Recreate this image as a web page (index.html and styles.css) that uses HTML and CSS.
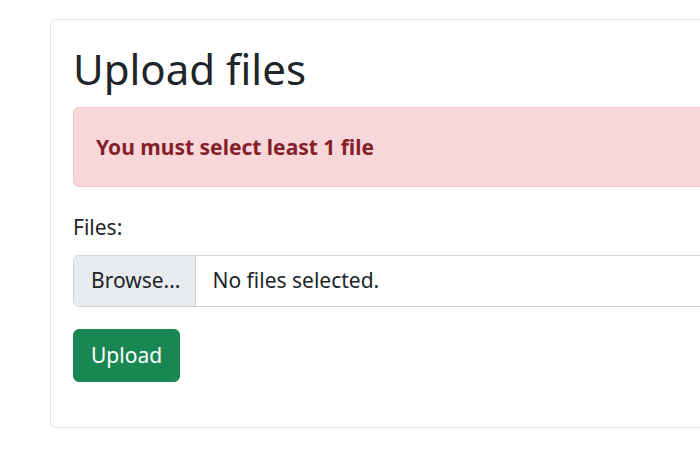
FILE: index.html
```html
<!DOCTYPE html>
<html lang="en">
<head>
<meta charset="utf-8">
<title>Upload files</title>
<link rel="stylesheet" href="styles.css">
</head>
<body>
<div class="page">
  <div class="card">
    <h1 class="title">Upload files</h1>
    <div class="alert"><strong>You must select least 1 file</strong></div>
    <form class="form">
      <label class="label">Files:</label>
      <div class="file-input">
        <span class="file-btn">Browse...</span>
        <span class="file-name">No files selected.</span>
      </div>
      <button type="button" class="btn">Upload</button>
    </form>
  </div>
</div>
</body>
</html>
```

FILE: styles.css
```css
html, body {
  margin: 0;
  padding: 0;
  background: #fff;
}
body {
  font-family: "Noto Sans", "Open Sans", sans-serif;
  font-size: 21px;
  line-height: 1.5;
  color: #212529;
}
.page {
  padding: 19px 0 0 50px;
  width: 650px;
  overflow: hidden;
}
.card {
  width: 900px;
  border: 1px solid rgba(0,0,0,0.11);
  border-radius: 6px;
  padding: 22px;
}
.title {
  margin: 0 0 11px;
  font-size: 42px;
  font-weight: 400;
  line-height: 54px;
}
.alert {
  background: #f8d7da;
  border: 1px solid #f5c2c7;
  color: #842029;
  border-radius: 6px;
  padding: 22px;
  line-height: 34px;
  margin-bottom: 24px;
}
.alert strong { font-weight: 700; }
.form {
  margin-bottom: 23px;
}
.label {
  display: block;
  line-height: 33px;
  margin-bottom: 11px;
}
.file-input {
  display: flex;
  height: 52px;
  box-sizing: border-box;
  border: 1px solid #ced4da;
  border-radius: 6px;
  overflow: hidden;
  margin-bottom: 22px;
}
.file-btn {
  display: flex;
  align-items: center;
  padding: 0 15px 0 17px;
  background: #e9ecef;
  border-right: 1px solid #ced4da;
}
.file-name {
  display: flex;
  align-items: center;
  padding: 0 16px;
}
.btn {
  display: block;
  font: inherit;
  color: #fff;
  background: #198754;
  border: 1px solid #198754;
  border-radius: 6px;
  height: 53px;
  padding: 0 17px;
}
```
